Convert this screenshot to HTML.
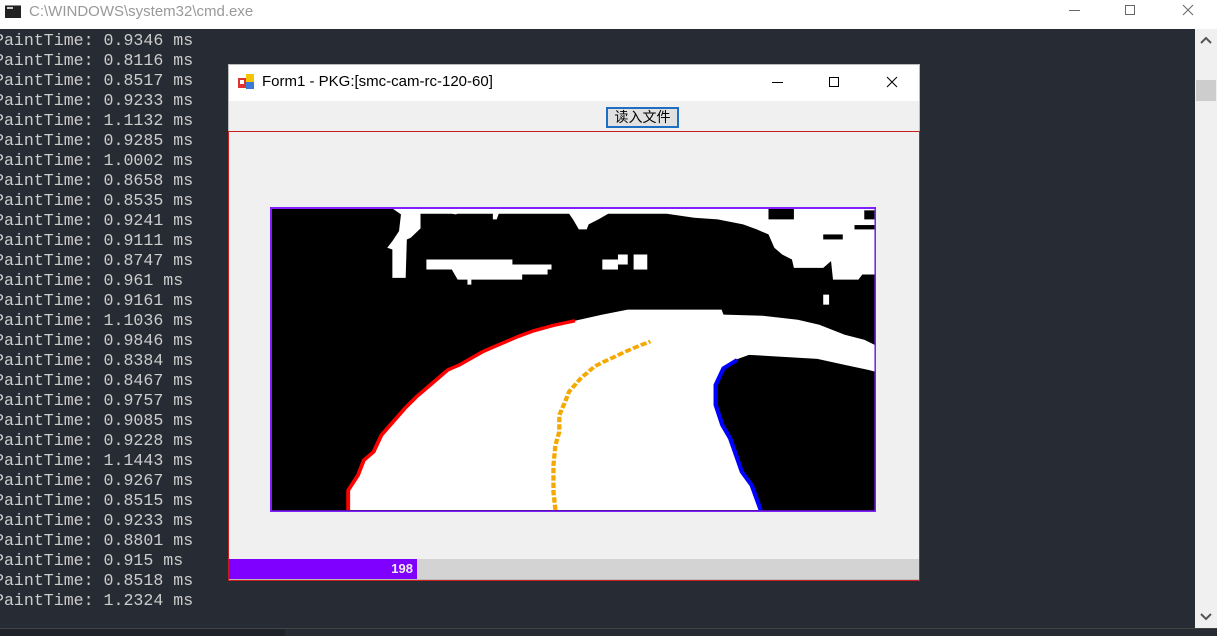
<!DOCTYPE html><html><head><meta charset="utf-8"><style>
*{margin:0;padding:0;box-sizing:border-box}
body{width:1217px;height:636px;overflow:hidden;background:#272b33;position:relative;font-family:"Liberation Sans","Noto Sans CJK SC",sans-serif}
.tb{position:absolute;left:0;top:0;width:1217px;height:29px;background:#fff}
.tb .t{position:absolute;left:29px;top:3px;font-size:15px;color:#999}
.con{position:absolute;left:-6px;top:31px;font-family:"Liberation Mono","Noto Sans CJK SC",monospace;font-size:16.6px;line-height:20px;color:#ccc;white-space:pre}
.sb{position:absolute;left:1195px;top:29px;width:22px;height:599px;background:#f0f0f0}
.win{position:absolute;left:228px;top:64px;width:692px;height:516px;background:#f0f0f0;border:1px solid #bbb}
.wt{position:absolute;left:0;top:0;width:690px;height:36px;background:#fff}
.wt .t{position:absolute;left:33px;top:8px;font-size:15px;color:#000}
.btn{position:absolute;left:377px;top:42px;width:73px;height:21px;border:2px solid #1e6fc4;background:#e1e1e1;font-size:14px;text-align:center;line-height:17px;color:#000}
.panel{position:absolute;left:-1px;top:66px;width:692px;height:450px;border:1px solid #c81e1e}
.pb{position:absolute;left:0;top:427px;width:690px;height:20px;background:#d3d3d3}
.pf{position:absolute;left:0;top:0;width:188px;height:20px;background:#8000ff;color:#eee;font-weight:bold;font-size:13px;text-align:right;padding-right:4px;line-height:20px}
</style></head><body>
<div class="tb"><svg style="position:absolute;left:5px;top:5px" width="16" height="13"><rect width="16" height="13" fill="#222"/><rect x="2" y="2" width="6" height="2" fill="#ccc"/><rect x="0" y="0" width="16" height="1" fill="#888"/></svg><div class="t">C:\WINDOWS\system32\cmd.exe</div>
<svg style="position:absolute;left:1060px;top:0" width="157" height="29" stroke="#666" fill="none" stroke-width="1"><line x1="9" y1="10.5" x2="20" y2="10.5"/><rect x="65.5" y="5.5" width="9" height="9"/><path d="M123 5l10 10M133 5l-10 10"/></svg></div>
<div class="con">PaintTime: 0.9346 ms
PaintTime: 0.8116 ms
PaintTime: 0.8517 ms
PaintTime: 0.9233 ms
PaintTime: 1.1132 ms
PaintTime: 0.9285 ms
PaintTime: 1.0002 ms
PaintTime: 0.8658 ms
PaintTime: 0.8535 ms
PaintTime: 0.9241 ms
PaintTime: 0.9111 ms
PaintTime: 0.8747 ms
PaintTime: 0.961 ms
PaintTime: 0.9161 ms
PaintTime: 1.1036 ms
PaintTime: 0.9846 ms
PaintTime: 0.8384 ms
PaintTime: 0.8467 ms
PaintTime: 0.9757 ms
PaintTime: 0.9085 ms
PaintTime: 0.9228 ms
PaintTime: 1.1443 ms
PaintTime: 0.9267 ms
PaintTime: 0.8515 ms
PaintTime: 0.9233 ms
PaintTime: 0.8801 ms
PaintTime: 0.915 ms
PaintTime: 0.8518 ms
PaintTime: 1.2324 ms</div>
<div class="sb"><svg width="22" height="599"><path d="M6 14l5-5 5 5" stroke="#555" stroke-width="2" fill="none"/><rect x="1" y="51" width="20" height="21" fill="#cdcdcd"/><path d="M6 585l5 5 5-5" stroke="#555" stroke-width="2" fill="none"/></svg></div>
<div style="position:absolute;left:0;top:628px;width:1217px;height:1px;background:#444"></div>
<div style="position:absolute;left:0;top:629px;width:285px;height:7px;background:#1f2228"></div>
<div class="win">
<div class="wt"><svg style="position:absolute;left:9px;top:8px" width="17" height="17"><rect x="0" y="5" width="8" height="10" fill="#d33"/><rect x="2" y="7" width="4" height="4" fill="#fff"/><rect x="8" y="1" width="8" height="8" fill="#f5c400"/><rect x="8" y="9" width="8" height="7" fill="#3a7bd5"/></svg><div class="t">Form1 - PKG:[smc-cam-rc-120-60]</div>
<svg style="position:absolute;left:530px;top:0" width="160" height="36" stroke="#000" fill="none" stroke-width="1"><line x1="13" y1="17.5" x2="24" y2="17.5"/><rect x="70.5" y="12.5" width="9" height="9"/><path d="M128 12l10 10M138 12l-10 10"/></svg></div>
<div class="btn">读入文件</div>
<div class="panel"><div class="pb"><div class="pf">198</div></div></div>
</div>
<svg style="position:absolute;left:270px;top:207px" width="606" height="305" viewBox="5 8 1550 912" preserveAspectRatio="none">
<rect x="5" y="8" width="1550" height="912" fill="#7f1fff"/>
<rect x="10" y="14" width="1541" height="901" fill="#000"/>
<path fill="#fff" d="M205,914 L205,855 230,810 245,765 270,740 290,690 320,650 350,610 380,575 400,555 430,525 460,495 490,480 520,460 550,440 590,420 640,395 680,378 730,362 785,348 855,330 920,315 1160,315 1165,330 1265,333 1355,345 1410,360 1475,390 1525,405 1551,420 1551,500 1535,495 1475,480 1405,462 1230,450 1195,465 1160,490 1140,540 1140,600 1160,660 1180,700 1195,750 1210,800 1235,840 1260,914Z"/>
<path fill="#fff" d="M320,14 L390,14 390,72 365,100 355,105 352,220 318,220 318,135 305,130 318,110 335,80 340,30Z"/>
<path fill="#fff" d="M380,14 L1551,14 1551,210 1520,210 1510,225 1445,225 1440,170 1420,190 1345,190 1340,165 1315,150 1295,130 1280,90 1250,75 1215,60 1150,45 1090,40 1020,28 870,28 845,45 820,60 815,75 795,75 780,45 770,28 590,28 585,45 575,45 575,28 485,28 480,30 470,28 380,28Z"/>
<g fill="#000"><rect x="1280" y="14" width="65" height="31"/><rect x="1525" y="18" width="26" height="27"/><rect x="1500" y="62" width="51" height="13"/><rect x="1420" y="90" width="50" height="15"/></g>
<path fill="#fff" d="M405,165 L625,165 625,180 725,180 725,195 715,195 715,210 650,210 650,225 520,225 520,240 510,240 510,225 485,225 470,195 405,195Z"/>
<g fill="#fff"><rect x="855" y="165" width="40" height="30"/><rect x="895" y="150" width="25" height="30"/><rect x="935" y="150" width="35" height="45"/><rect x="1420" y="270" width="15" height="30"/></g>
<polyline fill="none" stroke="#f00" stroke-width="10" points="205,914 205,855 230,810 245,765 270,740 290,690 320,650 350,610 380,575 400,555 430,525 460,495 490,480 520,460 550,440 590,420 640,395 680,378 730,362 785,348"/>
<polyline fill="none" stroke="#00f" stroke-width="11" points="1200,465 1165,490 1145,540 1145,600 1162,660 1182,700 1197,750 1212,800 1237,840 1260,914"/>
<polyline fill="none" stroke="#f5a800" stroke-width="11" stroke-dasharray="16 6" points="735,914 730,860 730,780 735,720 745,680 745,630 760,590 770,560 785,540 800,520 820,500 835,485 860,470 888,455 915,440 945,425 978,410"/>
</svg>
</body></html>
